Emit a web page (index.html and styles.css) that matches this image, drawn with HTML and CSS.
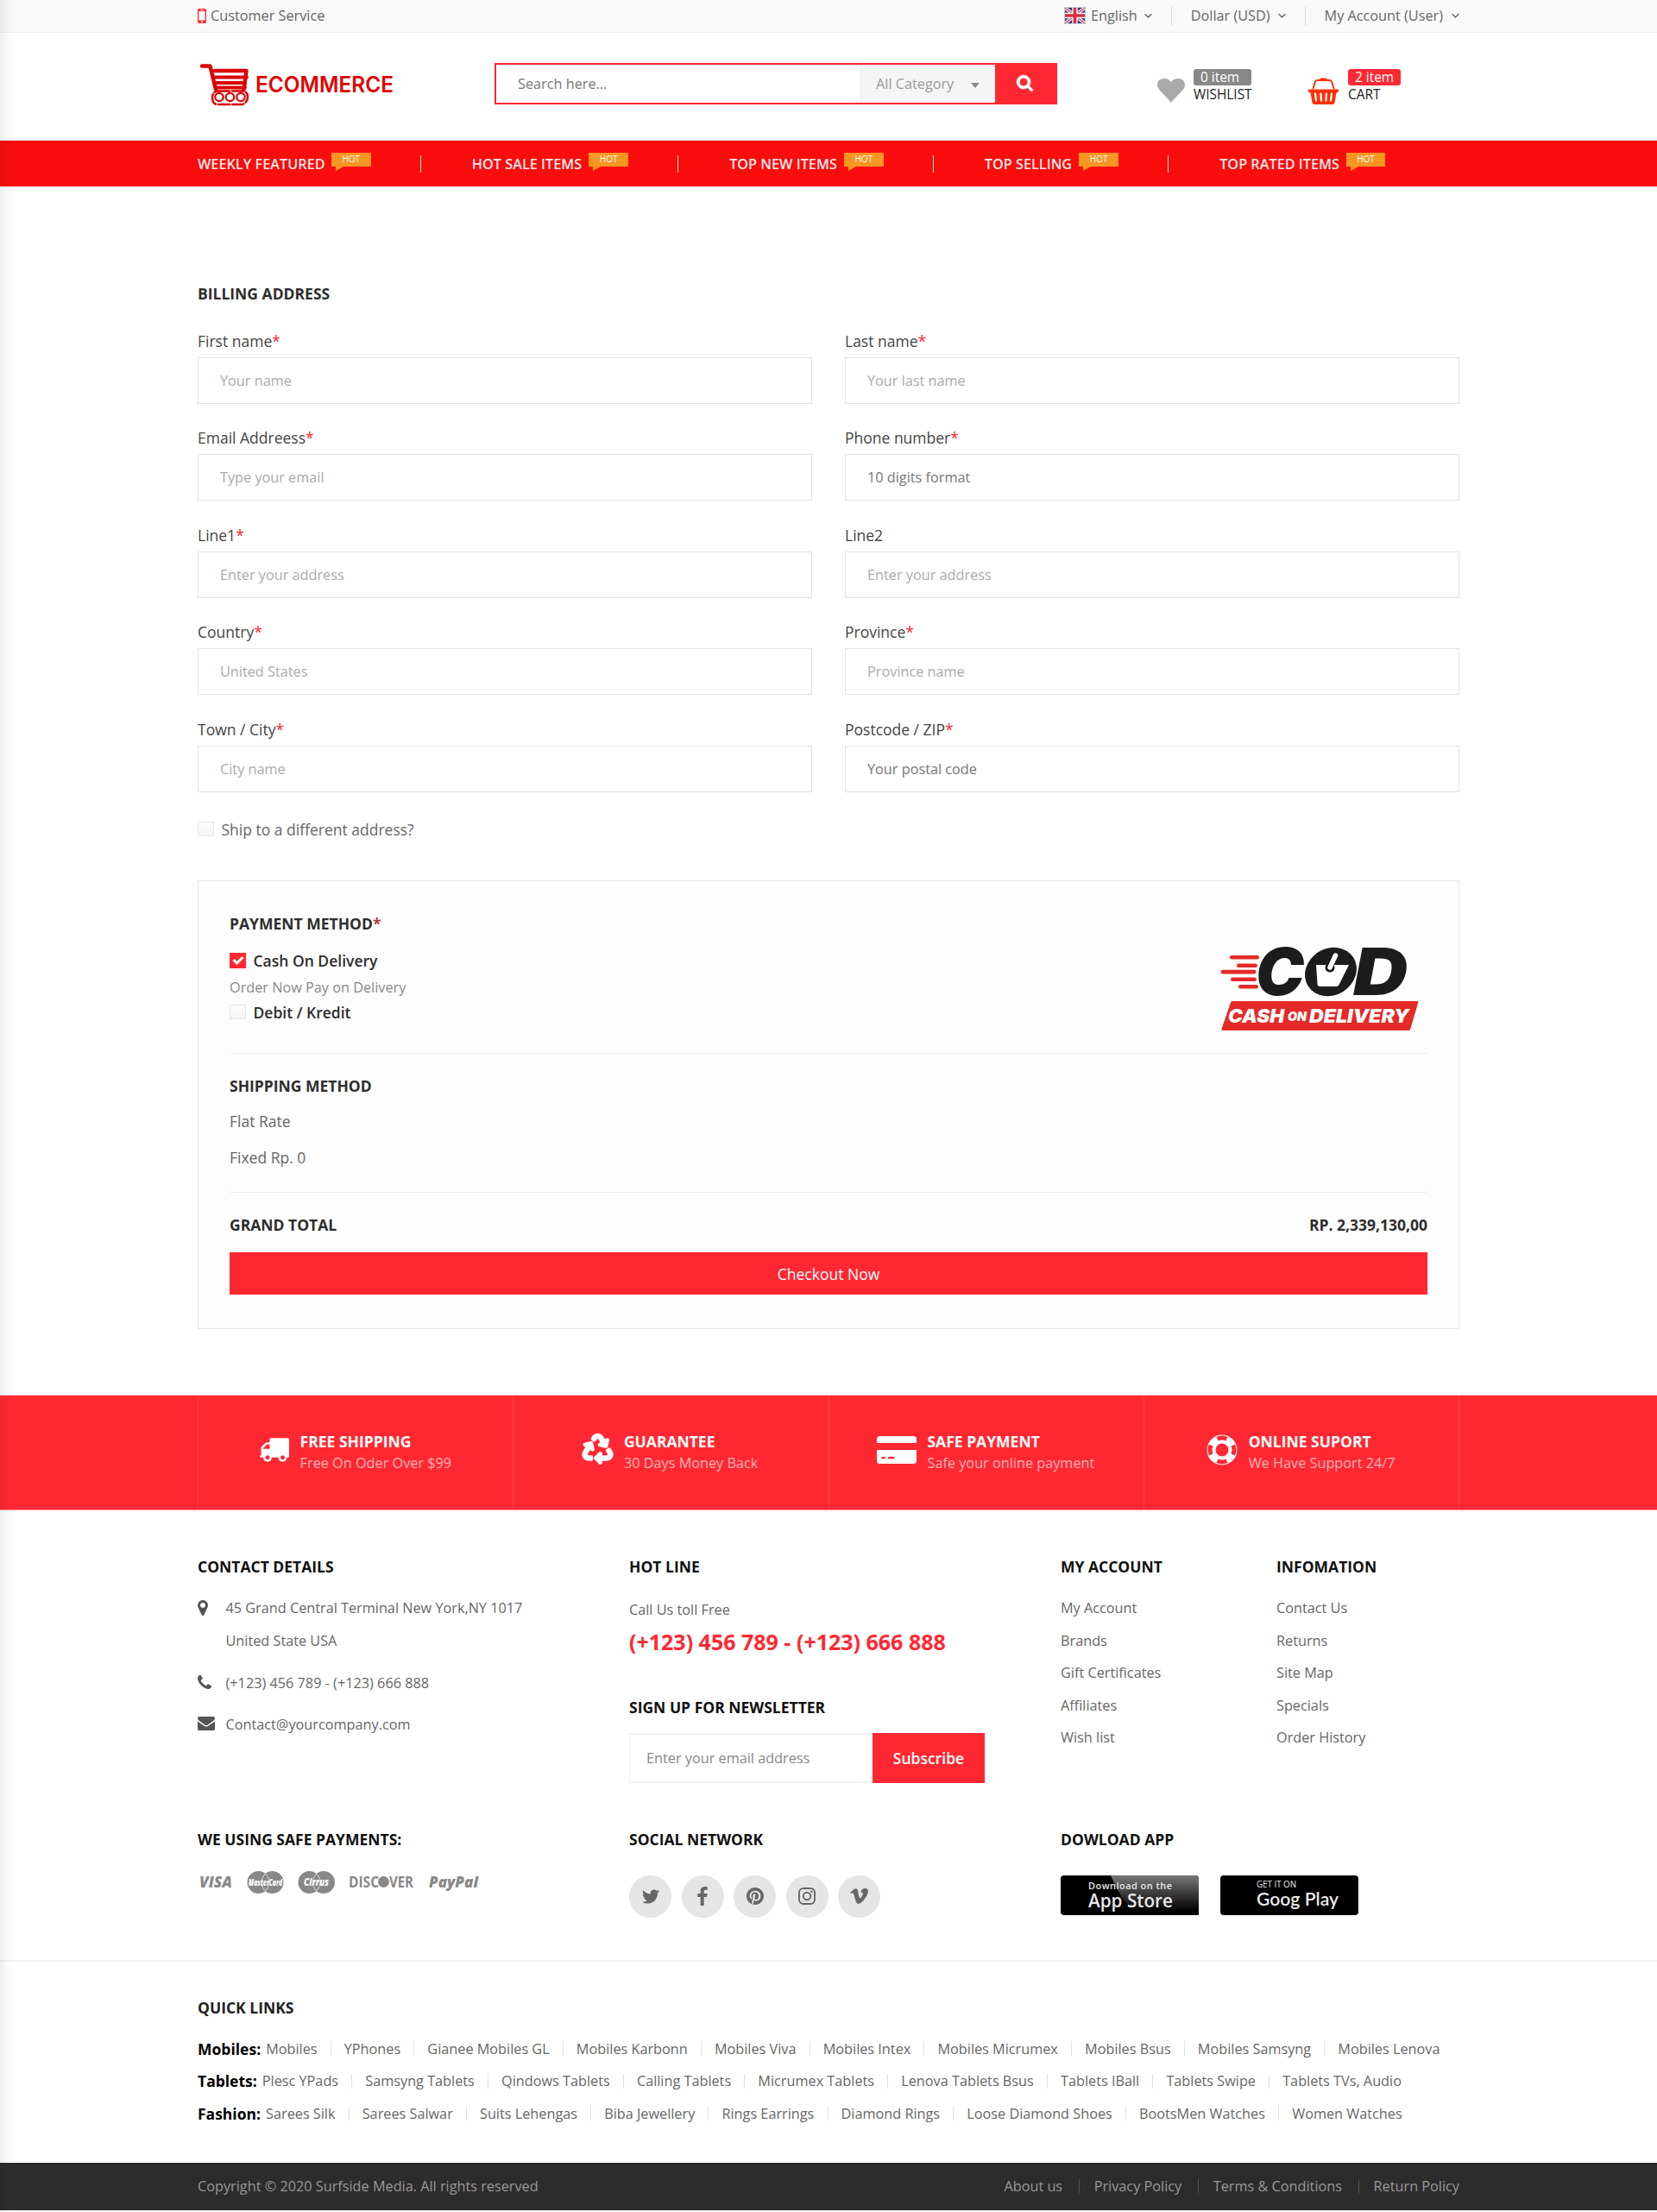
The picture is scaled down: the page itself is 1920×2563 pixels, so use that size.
FILE: index.html
```html
<!DOCTYPE html>
<html lang="en">
<head>
<meta charset="utf-8">
<title>Checkout</title>
<link rel="stylesheet" href="styles.css">
</head>
<body>
<div class="edge-shadow"></div>
<header>
  <div class="topbar"><div class="container topbar-in">
    <div class="service"><svg width="10" height="17" viewBox="0 0 10 17"><path fill="#ff2832" fill-rule="evenodd" d="M2 0h6q2 0 2 2v13q0 2-2 2H2q-2 0-2-2V2q0-2 2-2zM1.3 3v10.6h7.4V3zM3.3 1.1v.8h3.4v-.8zM5 14.2a1 1 0 1 0 .01 0z"/></svg><span>Customer Service</span></div>
    <ul class="topmenu">
      <li><svg class="flag" width="25" height="20" viewBox="0 0 25 20"><rect width="25" height="20" rx="2" fill="#2f3f82"/><path d="M1 1l23 18M24 1L1 19" stroke="#e9e3ec" stroke-width="4"/><path d="M1 1l23 18M24 1L1 19" stroke="#d8475a" stroke-width="1.3"/><path d="M12.500 0v20M0 10h25" stroke="#f3eef3" stroke-width="6.500"/><path d="M12.500 0v20M0 10h25" stroke="#d6303f" stroke-width="3.500"/><rect x=".5" y=".5" width="24" height="19" rx="2" fill="none" stroke="#c9cbd8"/></svg>English<svg class="chev" width="9" height="7" viewBox="0 0 9 7"><path d="M.7 1.200l3.800 3.800 3.800-3.800"/></svg></li>
      <li>Dollar (USD)<svg class="chev" width="9" height="7" viewBox="0 0 9 7"><path d="M.7 1.200l3.800 3.800 3.800-3.800"/></svg></li>
      <li>My Account (User)<svg class="chev" width="9" height="7" viewBox="0 0 9 7"><path d="M.7 1.200l3.800 3.800 3.800-3.800"/></svg></li>
    </ul>
  </div></div>
  <div class="midbar"><div class="container mid-in">
    <svg class="logo" width="228" height="52" viewBox="0 0 228 52">
      <g fill="none" stroke="#dc0303" stroke-linecap="round" stroke-linejoin="round">
        <path d="M5 3.500h9.500l6.500 27" stroke-width="4.500"/>
        <path d="M20 9h36.500l-3 22" stroke-width="4.500"/>
        <path d="M20 16.500h37M21 23h34M23 28.500h32" stroke-width="4"/>
        <path d="M24 32.500h29q5 1 5 7t-6 8.500H22q-5-1-5-8t7-7.500" stroke-width="2.500" stroke-dasharray="13 3"/>
        <g stroke-width="2.200"><circle cx="25" cy="39.500" r="4.700"/><circle cx="37.500" cy="39.500" r="4.700"/><circle cx="50" cy="39.500" r="4.700"/></g>
      </g>
      <text x="67" y="33.500" class="logo-text" textLength="160" lengthAdjust="spacingAndGlyphs">ECOMMERCE</text>
    </svg>
    <form class="search">
      <input class="search-input" placeholder="Search here...">
      <div class="search-cat">All Category<span class="caret"></span></div>
      <button class="search-btn" type="button" aria-label="Search"><svg width="19" height="19" viewBox="40 104 1712 1712"><path fill="#fff" stroke="#fff" stroke-width="90" d="M1216 832q0-185-131.500-316.500t-316.500-131.500-316.500 131.500-131.500 316.500 131.500 316.500 316.500 131.500 316.500-131.500 131.500-316.500zm512 832q0 52-38 90t-90 38q-54 0-90-38l-343-342q-179 124-399 124-143 0-273.500-55.500t-225-150-150-225-55.500-273.500 55.500-273.500 150-225 225-150 273.500-55.500 273.500 55.500 225 150 150 225 55.500 273.500q0 220-124 399l343 343q37 37 37 90z"/></svg></button>
    </form>
    <div class="mini wish">
      <svg width="32" height="28" viewBox="0 0 32 28"><path fill="#aaa" d="M16 28Q12 23 4.500 15.500 0 11 0 7.500 0 0 8 0q5 0 8 4 3-4 8-4 8 0 8 7.500 0 3.500-4.500 8Q20 23 16 28z"/></svg>
      <div><span class="tag">0 item</span><b>WISHLIST</b></div>
    </div>
    <div class="mini cart">
      <svg width="35" height="31" viewBox="0 0 35 31"><path fill="none" stroke="#ff3008" stroke-width="2" stroke-linecap="round" d="M5.500 12.500L8 4.500q.5-1.500 3-1.500h13q2.500 0 3 1.500l2.500 8"/><path fill="#ff3008" d="M14 .5h7l1.500 3.500h-10zM1 13.500h33q1 0 1 1v1.500q0 1-1 1l-1.500.5-2 11.500q-.5 2-2.500 2H7q-2 0-2.500-2l-2-11.500L1 17q-1 0-1-1v-1.500q0-1 1-1z"/><path stroke="#fff" stroke-width="2.200" stroke-linecap="round" d="M8 18.500l1 8M14.500 18.500l.4 8M20.800 18.500l-.4 8M27 18.500l-1 8"/></svg>
      <div><span class="tag red">2 item</span><b>CART</b></div>
    </div>
  </div></div>
  <nav class="mainnav"><ul class="container">
    <li>WEEKLY FEATURED<i class="hot">HOT</i></li>
    <li>HOT SALE ITEMS<i class="hot">HOT</i></li>
    <li>TOP NEW ITEMS<i class="hot">HOT</i></li>
    <li>TOP SELLING<i class="hot">HOT</i></li>
    <li>TOP RATED ITEMS<i class="hot">HOT</i></li>
  </ul></nav>
</header>

<main class="container">
  <h3 class="title">BILLING ADDRESS</h3>
  <div class="form-grid">
    <label class="field"><span>First name<em>*</em></span><input placeholder="Your name"></label>
    <label class="field"><span>Last name<em>*</em></span><input placeholder="Your last name"></label>
    <label class="field"><span>Email Addreess<em>*</em></span><input placeholder="Type your email"></label>
    <label class="field"><span>Phone number<em>*</em></span><input class="dark" placeholder="10 digits format"></label>
    <label class="field"><span>Line1<em>*</em></span><input placeholder="Enter your address"></label>
    <label class="field"><span>Line2</span><input placeholder="Enter your address"></label>
    <label class="field"><span>Country<em>*</em></span><input placeholder="United States"></label>
    <label class="field"><span>Province<em>*</em></span><input placeholder="Province name"></label>
    <label class="field"><span>Town / City<em>*</em></span><input placeholder="City name"></label>
    <label class="field"><span>Postcode / ZIP<em>*</em></span><input class="dark" placeholder="Your postal code"></label>
  </div>
  <div class="check ship"><i class="box"></i>Ship to a different address?</div>

  <section class="summary">
    <div class="pay">
      <div>
        <h3 class="title">PAYMENT METHOD<em>*</em></h3>
        <div class="check strong cod-check"><i class="box on"><svg width="14" height="11" viewBox="0 0 14 11"><path d="M1.500 5l4 4L12.500 2" fill="none" stroke="#fff" stroke-width="3"/></svg></i>Cash On Delivery</div>
        <p class="note">Order Now Pay on Delivery</p>
        <div class="check strong"><i class="box"></i>Debit / Kredit</div>
      </div>
      <svg class="cod" width="232" height="100" viewBox="0 0 232 100">
        <g fill="#e52a28"><rect x="11" y="11" width="34" height="4.400" rx="2.200"/><rect x="19" y="20.600" width="24" height="4.400" rx="2.200"/><rect x="0.500" y="27.800" width="41" height="4.600" rx="2.300"/><rect x="12" y="36.500" width="30" height="4.600" rx="2.300"/><rect x="21" y="45" width="23" height="4.600" rx="2.300"/>
        <path d="M12 65.500q.6-1.500 2-1.500h214q1.800 0 1.200 1.800l-9 30.700q-.5 1.500-2 1.500H3Q1 98 1.500 96.200z"/></g>
        <text class="cod-big" x="41" y="57" textLength="56" lengthAdjust="spacingAndGlyphs">C</text>
        <text class="cod-big" x="154" y="57" textLength="63" lengthAdjust="spacingAndGlyphs">D</text>
        <ellipse cx="128" cy="30" rx="31" ry="27" transform="rotate(-32 128 30)" fill="#1c1c1c"/>
        <path d="M111 22h38l-11.500 23q-1 2-3 2h-19q-3 0-3-3z" fill="#fff"/>
        <circle cx="127" cy="25" r="5.500" fill="#1c1c1c"/>
        <path d="M127 25l6.500-14" stroke="#fff" stroke-width="5.500" stroke-linecap="round"/>
        <path d="M122.500 25a4.600 4.600 0 0 0 9 1" fill="none" stroke="#1c1c1c" stroke-width="1.500"/>
        <text class="cod-s" x="9" y="88.500" font-size="21.500" textLength="65" lengthAdjust="spacingAndGlyphs">CASH</text>
        <text class="cod-s" x="78" y="86.500" font-size="14.500" textLength="22" lengthAdjust="spacingAndGlyphs">ON</text>
        <text class="cod-s" x="103" y="88.500" font-size="21.500" textLength="116" lengthAdjust="spacingAndGlyphs">DELIVERY</text>
      </svg>
    </div>
    <div class="shipm">
      <h3 class="title">SHIPPING METHOD</h3>
      <p>Flat Rate</p>
      <p>Fixed Rp. 0</p>
    </div>
    <div class="grand title"><span>GRAND TOTAL</span><span>RP. 2,339,130,00</span></div>
    <button class="checkout" type="button">Checkout Now</button>
  </section>
</main>

<section class="band"><div class="container band-in">
  <div class="feat"><svg width="35" height="28" viewBox="0 256 1792 1408"><path fill="#fff" d="M640 1408q0-52-38-90t-90-38-90 38-38 90 38 90 90 38 90-38 38-90zm-384-512h384v-256h-158q-13 0-22 9l-195 195q-9 9-9 22v30zm1280 512q0-52-38-90t-90-38-90 38-38 90 38 90 90 38 90-38 38-90zm256-1088v1024q0 15-4 26.500t-13.500 18.500-16.500 11.500-23.500 6-22.500 2-25.500 0-22.500-.5q0 106-75 181t-181 75-181-75-75-181h-384q0 106-75 181t-181 75-181-75-75-181h-64q-3 0-22.500.5t-25.500 0-22.500-2-23.500-6-16.500-11.500-13.500-18.500-4-26.500q0-26 19-45t45-19v-320q0-8-.5-35t0-38 2.500-34.500 6.500-37 14-30.500 22.500-30l198-198q19-19 50.500-32t58.500-13h160v-192q0-26 19-45t45-19h1024q26 0 45 19t19 45z"/></svg><div><b>FREE SHIPPING</b><span>Free On Oder Over $99</span></div></div>
  <div class="feat"><svg width="35" height="35" viewBox="-8 8 528 518"><path fill="#fff" stroke="#fff" stroke-width="34" d="M184.561 261.903c3.232 13.997-12.123 24.635-24.068 17.168l-40.736-25.455-50.867 81.402C55.606 356.273 70.960 384 96.012 384H148c6.627 0 12 5.373 12 12v40c0 6.627-5.373 12-12 12H96.115c-75.334 0-121.302-83.048-81.408-146.880l50.822-81.388-40.725-25.448c-12.081-7.547-8.966-25.961 4.879-29.158l110.237-25.450c8.611-1.988 17.201 3.381 19.189 11.990l25.452 110.237zm98.561-182.915l41.289 66.076-40.740 25.457c-12.051 7.528-9 25.953 4.879 29.158l110.237 25.450c8.672 1.999 17.215-3.438 19.189-11.990l25.450-110.237c3.197-13.844-11.990-24.719-24.068-17.168l-40.687 25.424-41.263-66.082c-37.521-60.033-125.209-60.171-162.816 0l-17.963 28.766c-3.510 5.620-1.800 13.021 3.820 16.533l33.919 21.195c5.620 3.512 13.024 1.803 16.536-3.817l17.961-28.743c12.712-20.341 41.973-19.676 54.257-.022zM497.288 301.120l-27.515-44.065c-3.511-5.623-10.916-7.334-16.538-3.821l-33.861 21.159c-5.620 3.512-7.330 10.915-3.818 16.536l27.564 44.112c13.257 21.211-2.057 48.960-27.136 48.960H320V336.020c0-14.213-17.242-21.383-27.313-11.313l-80 79.981c-6.249 6.248-6.249 16.379 0 22.627l80 79.989C302.689 517.308 320 510.300 320 495.989V448h95.880c75.274 0 121.335-82.997 81.408-146.880z"/></svg><div><b>GUARANTEE</b><span>30 Days Money Back</span></div></div>
  <div class="feat"><svg width="46" height="32" viewBox="0 0 46 32"><path fill="#fff" fill-rule="evenodd" d="M3.500 0h39q3.500 0 3.500 3.500V8H0V3.500Q0 0 3.500 0zM0 16h46v12.500q0 3.500-3.500 3.500h-39Q0 32 0 28.500zM5.500 24v2.200h4.500V24zM13 24v2.200h7.500V24z"/></svg><div><b>SAFE PAYMENT</b><span>Safe your online payment</span></div></div>
  <div class="feat"><svg width="36" height="36" viewBox="0 0 36 36"><circle cx="18" cy="18" r="12.500" fill="none" stroke="#fff" stroke-width="10"/><g fill="none" stroke="#ff2832" stroke-width="5"><path d="M12.500 5.200a14 14 0 0 1 11 0M12.500 30.800a14 14 0 0 0 11 0M5.200 12.500a14 14 0 0 0 0 11M30.800 12.500a14 14 0 0 1 0 11"/></g></svg><div><b>ONLINE SUPORT</b><span>We Have Support 24/7</span></div></div>
</div></section>

<footer>
  <div class="container foot-grid">
    <div>
      <h4>CONTACT DETAILS</h4>
      <ul class="contact">
        <li><svg width="12" height="18" viewBox="384 128 1024 1536"><path fill="#555" d="M1152 640q0-106-75-181t-181-75-181 75-75 181 75 181 181 75 181-75 75-181zm256 0q0 109-33 179l-364 774q-16 33-47.500 52t-67.500 19-67.500-19-46.500-52l-365-774q-33-70-33-179 0-212 150-362t362-150 362 150 150 362z"/></svg><p>45 Grand Central Terminal New York,NY 1017<br>United State USA</p></li>
        <li><svg width="16" height="16" viewBox="192 128 1408 1408"><path fill="#555" d="M1600 1240q0 27-10 70.500t-21 68.500q-21 50-122 106-94 51-186 51-27 0-53-3.500t-57.500-12.500-47-14.500-55.500-20.500-49-18q-98-35-175-83-127-79-264-216t-216-264q-48-77-83-175-3-9-18-49t-20.500-55.500-14.500-47-12.500-57.500-3.500-53q0-92 51-186 56-101 106-122 25-11 68.500-21t70.500-10q14 0 21 3 18 6 53 76 11 19 30 54t35 63.500 31 53.500q3 4 17.500 25t21.500 35.500 7 28.500q0 20-28.500 50t-62 55-62 53-28.500 46q0 9 5 22.500t8.500 20.500 14 24 11.500 19q76 137 174 235t235 174q2 1 19 11.500t24 14 20.500 8.500 22.500 5q18 0 46-28.500t53-62 55-62 50-28.500q14 0 28.500 7t35.500 21.500 25 17.500q25 15 53.500 31t63.500 35 54 30q70 35 76 53 3 7 3 21z"/></svg><p>(+123) 456 789 - (+123) 666 888</p></li>
        <li><svg width="20" height="16" viewBox="0 256 1792 1408" preserveAspectRatio="none"><path fill="#555" d="M1792 710v794q0 66-47 113t-113 47h-1472q-66 0-113-47t-47-113v-794q44 49 101 87 362 246 497 345 57 42 92.500 65.500t94.500 48 110 24.500h2q51 0 110-24.500t94.500-48 92.500-65.500q170-123 498-345 57-39 100-87zm0-294q0 79-49 151t-122 123q-376 261-468 325-10 7-42.500 31t-54 38.500-52 32.500-57.500 27-50 9h-2q-23 0-50-9t-57.500-27-52-32.500-54-38.500-42.500-31q-91-64-262-182.500t-205-142.500q-62-42-117-115.500t-55-136.500q0-78 41.500-130t118.500-52h1472q65 0 112.500 47t47.500 113z"/></svg><p>Contact@yourcompany.com</p></li>
      </ul>
    </div>
    <div>
      <h4>HOT LINE</h4>
      <p class="toll">Call Us toll Free</p>
      <p class="hotline">(+123) 456 789 - (+123) 666 888</p>
      <h4 class="news-title">SIGN UP FOR NEWSLETTER</h4>
      <form class="news"><input placeholder="Enter your email address"><button type="button">Subscribe</button></form>
    </div>
    <div><h4>MY ACCOUNT</h4><ul class="links"><li>My Account</li><li>Brands</li><li>Gift Certificates</li><li>Affiliates</li><li>Wish list</li></ul></div>
    <div><h4>INFOMATION</h4><ul class="links"><li>Contact Us</li><li>Returns</li><li>Site Map</li><li>Specials</li><li>Order History</li></ul></div>
  </div>
  <div class="container foot-grid second">
    <div>
      <h4>WE USING SAFE PAYMENTS:</h4>
      <svg class="cards" width="326" height="28" viewBox="0 0 326 28">
        <g fill="#888">
          <text x="2" y="19.500" class="card-t it" font-size="18" textLength="38" lengthAdjust="spacingAndGlyphs">VISA</text>
          <circle cx="70.500" cy="14" r="13"/><circle cx="86.500" cy="14" r="13"/>
          <circle cx="129.500" cy="14" r="13"/><circle cx="146" cy="14" r="13"/>
          <text x="175" y="20" class="card-t thin" font-size="18" textLength="35" lengthAdjust="spacingAndGlyphs">DISC</text><circle cx="215.500" cy="13.500" r="6.500"/>
          <text x="222" y="20" class="card-t thin" font-size="18" textLength="28" lengthAdjust="spacingAndGlyphs">VER</text>
          <text x="268" y="20" class="card-t it" font-size="18" textLength="57" lengthAdjust="spacingAndGlyphs">PayPal</text>
        </g>
        <g fill="none" stroke="#ddd" stroke-width="1"><path d="M78.500 3.500q-9 10.500 0 21 9-10.500 0-21zM137.700 3.500q-9 10.500 0 21 9-10.500 0-21z"/></g>
        <g fill="#fff" stroke="#888" stroke-width=".6" paint-order="stroke">
          <text x="59" y="17.500" class="card-t it" font-size="10" textLength="39" lengthAdjust="spacingAndGlyphs">MasterCard</text>
          <text x="123" y="18" class="card-t it" font-size="12" textLength="29" lengthAdjust="spacingAndGlyphs">Cirrus</text>
        </g>
      </svg>
    </div>
    <div>
      <h4>SOCIAL NETWORK</h4>
      <div class="social">
        <i><svg width="20" height="17" viewBox="108 256 1576 1280"><path fill="#666" d="M1684 408q-67 98-162 167 1 14 1 42 0 130-38 259.500t-115.500 248.500-184.500 210.500-258 146-323 54.500q-271 0-496-145 35 4 78 4 225 0 401-138-105-2-188-64.500t-114-159.500q33 5 61 5 43 0 85-11-112-23-185.500-111.500t-73.500-205.500v-4q68 38 146 41-66-44-105-115t-39-154q0-88 44-163 121 149 294.500 238.500t371.500 99.500q-8-38-8-74 0-134 94.500-228.500t228.500-94.500q140 0 236 102 109-21 205-78-37 115-142 178 93-10 186-50z"/></svg></i>
        <i><svg width="12" height="22" viewBox="479 0 864 1664"><path fill="#666" d="M1343 12v264h-157q-86 0-116 36t-30 108v189h293l-39 296h-254v759h-306v-759h-255v-296h255v-218q0-186 104-288.500t277-102.500q147 0 228 12z"/></svg></i>
        <i><svg width="20" height="20" viewBox="0 8 496 496"><path fill="#666" d="M496 256c0 137-111 248-248 248-25.600 0-50.200-3.900-73.400-11.100 10.100-16.500 25.200-43.500 30.800-65 3-11.600 15.400-59 15.400-59 8.100 15.400 31.700 28.500 56.800 28.500 74.800 0 128.700-68.800 128.700-154.300 0-81.900-66.900-143.200-152.900-143.200-107 0-163.900 71.800-163.900 150.100 0 36.400 19.400 81.700 50.300 96.100 4.700 2.200 7.200 1.200 8.300-3.300.8-3.400 5-20.300 6.900-28.100.6-2.500.3-4.700-1.700-7.100-10.100-12.500-18.300-35.300-18.300-56.600 0-54.700 41.400-107.600 112-107.600 60.900 0 103.600 41.500 103.600 100.900 0 67.100-33.900 113.600-78 113.600-24.300 0-42.600-20.100-36.700-44.800 7-29.500 20.500-61.300 20.500-82.600 0-19-10.200-34.900-31.400-34.900-24.900 0-44.900 25.700-44.900 60.200 0 22 7.400 36.800 7.400 36.800s-24.500 103.800-29 123.200c-5 21.400-3 51.600-.9 71.200C65.400 450.900 0 361.100 0 256 0 119 111 8 248 8s248 111 248 248z"/></svg></i>
        <i><svg width="20" height="20" viewBox="0 0 20 20"><g fill="none" stroke="#666" stroke-width="1.900"><rect x="1" y="1" width="18" height="18" rx="5"/><circle cx="10" cy="10" r="4.200"/></g><circle cx="15.300" cy="4.700" r="1.200" fill="#666"/></svg></i>
        <i><svg width="21" height="18" viewBox="80 185 1630 1420"><path fill="#666" d="M1709 518q-10 236-332 651-333 431-562 431-142 0-240-263-44-160-132-482-72-262-157-262-18 0-127 76l-77-98q24-21 108-96.500t130-115.500q156-138 241-146 95-9 153 55.500t81 203.500q44 287 66 373 55 249 120 249 51 0 154-161 101-161 109-246 13-139-109-139-57 0-121 26 120-393 459-382 251 8 236 326z"/></svg></i>
      </div>
    </div>
    <div class="apps-col">
      <h4>DOWLOAD APP</h4>
      <div class="apps">
        <svg width="160" height="46" viewBox="0 0 160 46"><defs><linearGradient id="gloss" x1="0" y1="0" x2="0" y2="1"><stop offset="0" stop-color="#777"/><stop offset=".9" stop-color="#000"/></linearGradient></defs><rect width="160" height="46" rx="4"/><path d="M58 0h98q4 0 4 4v42H88Q68 26 58 0z" fill="url(#gloss)"/><text x="32" y="15.500" class="app-t" font-weight="600" font-size="11" textLength="97">Download on the</text><text x="32" y="37" class="app-t" font-weight="600" font-size="22" textLength="98" lengthAdjust="spacingAndGlyphs">App Store</text></svg>
        <svg width="160" height="46" viewBox="0 0 160 46"><rect width="160" height="46" rx="4"/><text x="42" y="13.500" class="app-t" font-size="11" textLength="46" lengthAdjust="spacingAndGlyphs">GET IT ON</text><text x="42" y="34.500" class="app-g" font-size="21.500" textLength="95" lengthAdjust="spacingAndGlyphs">Goog Play</text></svg>
      </div>
    </div>
  </div>
  <div class="quick"><div class="container">
    <h4>QUICK LINKS</h4>
    <div class="qrow"><b>Mobiles:</b><a>Mobiles</a><a>YPhones</a><a>Gianee Mobiles GL</a><a>Mobiles Karbonn</a><a>Mobiles Viva</a><a>Mobiles Intex</a><a>Mobiles Micrumex</a><a>Mobiles Bsus</a><a>Mobiles Samsyng</a><a>Mobiles Lenova</a></div>
    <div class="qrow"><b>Tablets:</b><a>Plesc YPads</a><a>Samsyng Tablets</a><a>Qindows Tablets</a><a>Calling Tablets</a><a>Micrumex Tablets</a><a>Lenova Tablets Bsus</a><a>Tablets IBall</a><a>Tablets Swipe</a><a>Tablets TVs, Audio</a></div>
    <div class="qrow"><b>Fashion:</b><a>Sarees Silk</a><a>Sarees Salwar</a><a>Suits Lehengas</a><a>Biba Jewellery</a><a>Rings Earrings</a><a>Diamond Rings</a><a>Loose Diamond Shoes</a><a>BootsMen Watches</a><a>Women Watches</a></div>
  </div></div>
  <div class="copy"><div class="container copy-in"><span>Copyright © 2020 Surfside Media. All rights reserved</span><div class="policy"><a>About us</a><a>Privacy Policy</a><a>Terms &amp; Conditions</a><a>Return Policy</a></div></div></div>
</footer>
</body>
</html>
```
FILE: styles.css
```css
* { box-sizing: border-box; margin: 0; padding: 0; }
body {
  position: relative;
  height: 2563px;
  background: #fff;
  font-family: "Open Sans", "Noto Sans", sans-serif;
  font-size: 16.25px;
  line-height: 24px;
  color: #666;
}
ul { list-style: none; }
i, em { font-style: normal; }
svg { display: block; flex: none; overflow: visible; }
input, button { font: inherit; border: 0; border-radius: 0; outline: 0; background: none; min-width: 0; }
.container { width: 1462px; margin: 0 auto; }
.edge-shadow {
  position: absolute;
  left: 0; top: 0; bottom: 0;
  width: 20px;
  pointer-events: none;
  background: linear-gradient(to right, rgba(0,0,0,.065), rgba(0,0,0,.02) 45%, rgba(0,0,0,0));
}

/* top bar */
.topbar { height: 38px; background: #f9f9f9; border-bottom: 1px solid #efefef; }
.topbar-in { display: flex; justify-content: space-between; height: 36px; }
.service { display: flex; align-items: center; gap: 5px; }
.topmenu { display: flex; align-items: center; }
.topmenu li { display: flex; align-items: center; height: 23px; padding-left: 22px; margin-left: 22px; border-left: 1px solid #dcdcdc; }
.topmenu li:first-child { border: 0; }
.flag { margin-right: 6px; }
.chev { margin: 1px 0 0 9px; fill: none; stroke: #666; stroke-width: 1.5; }
.topmenu li:first-child .chev { margin-left: 8px; }
.topmenu li:last-child .chev { margin-left: 10px; }

/* logo, search, mini cart */
.midbar { height: 125px; border-bottom: 1px solid #e6e6e6; }
.mid-in { display: flex; align-items: flex-start; }
.logo { margin-top: 35px; }
.logo-text { font: 600 26px Inter, sans-serif; fill: #dc0303; }
.search { display: flex; width: 652px; height: 48px; margin: 35px 0 0 116px; border: 2px solid #ff2832; }
.search-input { flex: 1; padding-left: 25px; }
.search-input::placeholder { color: #777; }
.search-cat { display: flex; align-items: center; justify-content: space-between; width: 157px; padding: 0 18px 0 19px; background: #f5f5f5; color: #999; }
.caret { border: 5px solid transparent; border-top: 6px solid #888; border-bottom: 0; margin-top: 4px; }
.search-btn { display: flex; align-items: center; justify-content: center; width: 70px; padding: 0 2px 2px 0; background: #ff2832; }
.mini { display: flex; gap: 10px; margin-top: 42px; color: #333; }
.mini svg { margin-top: 11px; }
.mini .tag { display: block; width: fit-content; height: 19px; padding: 0 8px; border-radius: 3px; background: #888; color: #fff; font-size: 15.4px; line-height: 19px; }
.mini .red { background: #ff2832; }
.mini b { display: block; margin-top: -1px; font-weight: 400; font-size: 15.4px; color: #222; }
.wish { margin-left: 116px; }
.wish .tag { width: 67px; }
.cart { margin-left: 65.5px; }
.cart svg { margin-top: 10px; }
.cart > div { margin-left: 1px; }

/* main menu */
.mainnav { height: 53px; background: #f90d0d; }
.mainnav ul { display: flex; height: 53px; align-items: center; }
.mainnav li { display: flex; align-items: center; font-weight: 600; color: #f5e9e9; white-space: nowrap; }
.mainnav li + li::before { content: ""; width: 1px; height: 20px; margin: 0 59px 0 57px; background: #f8dada; }
.hot { position: relative; width: 46px; height: 16px; margin: 0 0 9px 8px; background: #f79622; color: #fff; font-size: 10px; font-weight: 400; line-height: 15px; text-align: center; }
.mainnav li:first-child .hot { margin-left: 7.2px; }
.mainnav li:last-child .hot { width: 45px; }
.hot::after { content: ""; position: absolute; left: 5px; top: 16px; border-top: 5px solid #f79622; border-right: 9px solid transparent; }

/* billing form */
main { padding-top: 112px; }
.title { font-size: 17.5px; font-weight: 700; line-height: 24px; color: #2d2d2d; }
.form-grid { display: grid; grid-template-columns: 712px 712px; column-gap: 38px; row-gap: 28px; margin-top: 31.3px; }
.field { display: flex; flex-direction: column; font-size: 17.5px; color: #444; }
.field span { margin: -0.5px 0 7px; }
.field em { color: #ff2832; }
.field input { height: 54px; padding: 0 25px; border: 1px solid #e3e3e3; font-size: 16.25px; }
.field input::placeholder { color: #aaa; }
.field .dark::placeholder { color: #777; }
.check { display: flex; align-items: center; gap: 8.5px; font-size: 17.5px; }
.box { display: flex; align-items: center; justify-content: center; width: 19px; height: 17px; border: 1px solid #e6e6e6; background: linear-gradient(#fdfdfd, #f4f4f4); }
.box.on { height: 18px; border: 0; background: #ff2832; }
.ship { margin-top: 31.2px; }

/* order summary */
.summary { height: 520px; margin-top: 47px; padding: 37px 36px 0; border: 1px solid #e6e6e6; background: #fdfdfd; }
.pay { display: flex; justify-content: space-between; height: 163px; border-bottom: 1px solid #efefef; }
.pay em { color: #a94442; }
.strong { font-weight: 600; color: #2d2d2d; }
.cod-check { margin-top: 19px; }
.note { margin: 7px 0 5px; color: #888; }
.cod { margin: 38px 8px 0 0; }
.cod-big { font: italic 900 75px Inter, sans-serif; fill: #1c1c1c; }
.cod-s { font-family: Inter, sans-serif; font-weight: 900; font-style: italic; fill: #fff; }
.shipm { height: 161px; padding-top: 25.5px; border-bottom: 1px solid #efefef; font-size: 17.5px; }
.shipm p { margin: 16.5px 0 18.5px; }
.grand { display: flex; justify-content: space-between; margin: 25px 0 20px; }
.checkout { display: block; width: 100%; height: 49.5px; background: #ff2832; color: #fff; font-size: 17.5px; }

/* feature band */
.band { height: 134px; margin-top: 76px; border-top: 1px solid #ffc9cc; border-bottom: 1px solid #ff8d93; background: #ff2832; }
.band-in { display: grid; grid-template-columns: repeat(4, 1fr); height: 132px; border-left: 1px solid #ff404a; }
.feat { display: flex; align-items: center; justify-content: center; gap: 12.5px; padding: 0 1px 1px 0; border-right: 1px solid #ff404a; color: #ffb3b7; }
.feat b { display: block; font-size: 17.5px; font-weight: 700; color: #fff; }
.feat span { display: block; margin-top: 1px; }
.feat svg { margin-bottom: 5px; }

/* footer */
.foot-grid { display: grid; grid-template-columns: 500px 500px 250px 1fr; padding-top: 53.5px; }
h4 { font-size: 17.5px; font-weight: 700; line-height: 24px; color: #111; }
.contact { margin-top: 17px; }
.contact li { display: grid; grid-template-columns: 32.500px 1fr; margin-bottom: 10.5px; line-height: 38px; }
.contact svg { margin-top: 10px; }
.toll { margin-top: 25.5px; }
.hotline { margin-top: 8px; font-size: 25px; font-weight: 700; line-height: 34px; color: #ff2832; }
.news-title { margin-top: 47px; }
.news { display: flex; width: 412px; height: 58px; margin-top: 18px; }
.news input { width: 282px; padding-left: 19px; border: 2px solid #f1f1f1; border-width: 2px 0 2px 1px; }
.news input::placeholder { color: #888; }
.news button { flex: 1; background: #ff2832; color: #fff; font-size: 17.5px; font-weight: 600; }
.links { margin-top: 18px; line-height: 37.5px; }
.second { padding-top: 0; margin-top: 53px; height: 152px; }
.cards { margin-top: 24px; }
.social { display: flex; gap: 11.500px; margin-top: 30px; }
.social i { display: flex; align-items: center; justify-content: center; width: 49px; height: 49px; border-radius: 50%; background: #e5e5e5; }
.apps-col { grid-column: 3 / 5; }
.apps { display: flex; gap: 25px; margin-top: 30px; }
.app-t { font-family: "Open Sans", sans-serif; fill: #e8e8e8; }
.app-g { font-family: Lato, sans-serif; font-weight: 600; fill: #e8e8e8; }
.card-t { font-family: "Open Sans", sans-serif; font-weight: 800; }
.card-t.it { font-style: italic; }
.card-t.thin { font-weight: 700; }
.quick { height: 235px; padding-top: 41.5px; border-top: 2px solid #f1f1f1; }
.quick h4 { color: #222; margin-bottom: 22.8px; }
.qrow { display: flex; align-items: center; height: 37.5px; white-space: nowrap; padding-bottom: 12.500px; }
.qrow b { font-size: 17.5px; font-weight: 700; color: #000; margin-right: 6px; }
.qrow a { display: flex; align-items: center; }
.qrow a + a::before { content: ""; width: 1px; height: 17px; margin: 0 15px 0 15.200px; background: #e0e0e0; }
.copy { height: 55px; background: #2c2c2c; color: #999; }
.copy-in, .policy { display: flex; justify-content: space-between; align-items: center; height: 54px; }
.policy a { display: flex; align-items: center; }
.policy a + a::before { content: ""; width: 1px; height: 16px; margin: 0 17px 0 18.600px; background: #555; }
```
